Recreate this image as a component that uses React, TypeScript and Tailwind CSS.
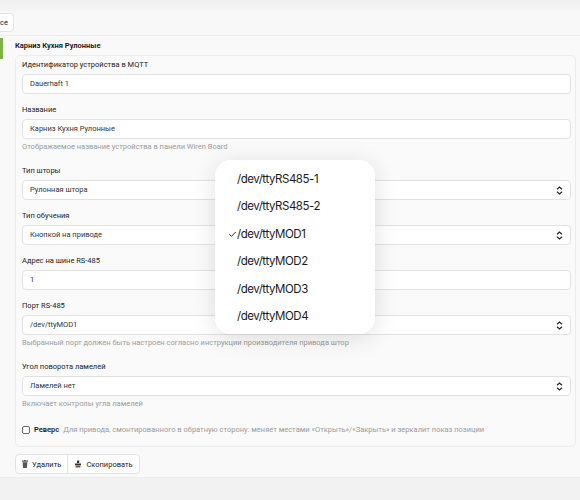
import { Check } from 'lucide-react'

const ports = ['/dev/ttyRS485-1', '/dev/ttyRS485-2', '/dev/ttyMOD1', '/dev/ttyMOD2', '/dev/ttyMOD3', '/dev/ttyMOD4']

function Chevrons() {
  return (
    <svg width="7" height="9" viewBox="0 0 7 9" fill="none" stroke="#222" strokeWidth="1.2">
      <path d="M1 3.2 3.5 1 6 3.2" />
      <path d="M1 5.8 3.5 8 6 5.8" />
    </svg>
  )
}

function Field({ label, value, select, help }: { label: string; value: string; select?: boolean; help?: string }) {
  return (
    <div className="flex flex-col">
      <div className="h-[18px] text-[7.5px] leading-[18px] text-[#222]">{label}</div>
      <div className="flex h-[20px] items-center justify-between rounded-[4px] border border-[#e2e2e2] bg-white pr-[7px] pl-[7px] text-[7.5px] text-[#333]">
        <span>{value}</span>
        {select && <Chevrons />}
      </div>
      {help && <div className="mt-[3px] text-[7.5px] leading-[10px] text-[#9a9a9a]">{help}</div>}
    </div>
  )
}

export default function App() {
  return (
    <div className="relative h-[500px] w-[580px] overflow-hidden bg-[#f9f9f9] font-['Roboto',sans-serif]">
      <div className="h-[12px] bg-gradient-to-b from-[#eeeeee] to-[#f6f6f6]" />
      <div className="flex h-[24px] items-start border-b border-[#ececec] bg-[#f8f8f8]">
        <div className="mt-[1px] -ml-[26px] flex h-[19px] w-[40px] items-center justify-end rounded-[4px] border border-[#e3e3e3] bg-white pr-[5px] text-[7.5px] text-[#222]">
          Все
        </div>
      </div>

      <div className="flex border-b border-[#ececec] pt-[1px]">
        <div className="mt-[1px] h-[21px] w-[3px] bg-[#7cb342]" />
        <div className="flex-1 pr-[4px] pb-[3px] pl-[12px]">
          <div className="pt-[3px] text-[7.5px] leading-[12px] font-semibold text-[#111]">Карниз Кухня Рулонные</div>
          <div className="mt-[3px] flex flex-col gap-[7px] rounded-[5px] border border-[#ececec] bg-[#fafafa] pt-[0px] pr-[4px] pb-[11px] pl-[6px]">
            <Field label="Идентификатор устройства в MQTT" value="Dauerhaft 1" />
            <Field label="Название" value="Карниз Кухня Рулонные" help="Отображаемое название устройства в панели Wiren Board" />
            <div className="mt-[3px]">
              <Field label="Тип шторы" value="Рулонная штора" select />
            </div>
            <Field label="Тип обучения" value="Кнопкой на приводе" select />
            <Field label="Адрес на шине RS-485" value="1" />
            <Field
              label="Порт RS-485"
              value="/dev/ttyMOD1"
              select
              help="Выбранный порт должен быть настроен согласно инструкции производителя привода штор"
            />
            <div className="mt-[3px]">
              <Field label="Угол поворота ламелей" value="Ламелей нет" select help="Включает контролы угла ламелей" />
            </div>
            <div className="mt-[8px] flex items-center gap-[4px] text-[7.5px]">
              <span className="h-[8px] w-[8px] rounded-[2px] border border-[#666] bg-white" />
              <span className="font-semibold text-[#222]">Реверс</span>
              <span className="text-[#9a9a9a]">
                Для привода, смонтированного в обратную сторону: меняет местами «Открыть»/«Закрыть» и зеркалит показ позиции
              </span>
            </div>
          </div>
          <div className="mt-[7px] flex h-[20px] w-fit overflow-hidden rounded-[4px] border border-[#e2e2e2] bg-white text-[7.5px] text-[#222]">
            <div className="flex items-center gap-[4px] border-r border-[#e2e2e2] px-[6px]">
              <svg width="6" height="8" viewBox="0 0 6 8" fill="#555">
                <rect x="0" y="0.5" width="6" height="1.2" />
                <rect x="2" y="0" width="2" height="1" />
                <path d="M0.6 2.3h4.8l-.5 5.7H1.1z" />
              </svg>
              Удалить
            </div>
            <div className="flex items-center gap-[4px] px-[6px]">
              <svg width="8" height="8" viewBox="0 0 8 8" fill="#333">
                <path d="M3 0.5h2.2v2.6H3z" />
                <path d="M1 3.4h6v1.8H1z" />
                <path d="M1.6 5.5h4.8v2H1.6z" fill="#6a5a3a" />
              </svg>
              Скопировать
            </div>
          </div>
        </div>
      </div>
      <div className="h-full bg-[#f2f2f2]" />

      <div className="absolute top-[160px] left-[215px] w-[160px] rounded-[16px] bg-white/95 pt-[6px] pb-[4px] font-['Inter',sans-serif] shadow-[0_4px_24px_rgba(0,0,0,0.12)]">
        {ports.map((p) => (
          <div key={p} className="relative flex h-[27.4px] items-center pl-[22px] text-[11.5px] tracking-[-0.45px] text-[#1a1a1a]">
            {p === '/dev/ttyMOD1' && <Check className="absolute left-[13px] h-[9px] w-[9px]" strokeWidth={2.5} />}
            {p}
          </div>
        ))}
      </div>
    </div>
  )
}
